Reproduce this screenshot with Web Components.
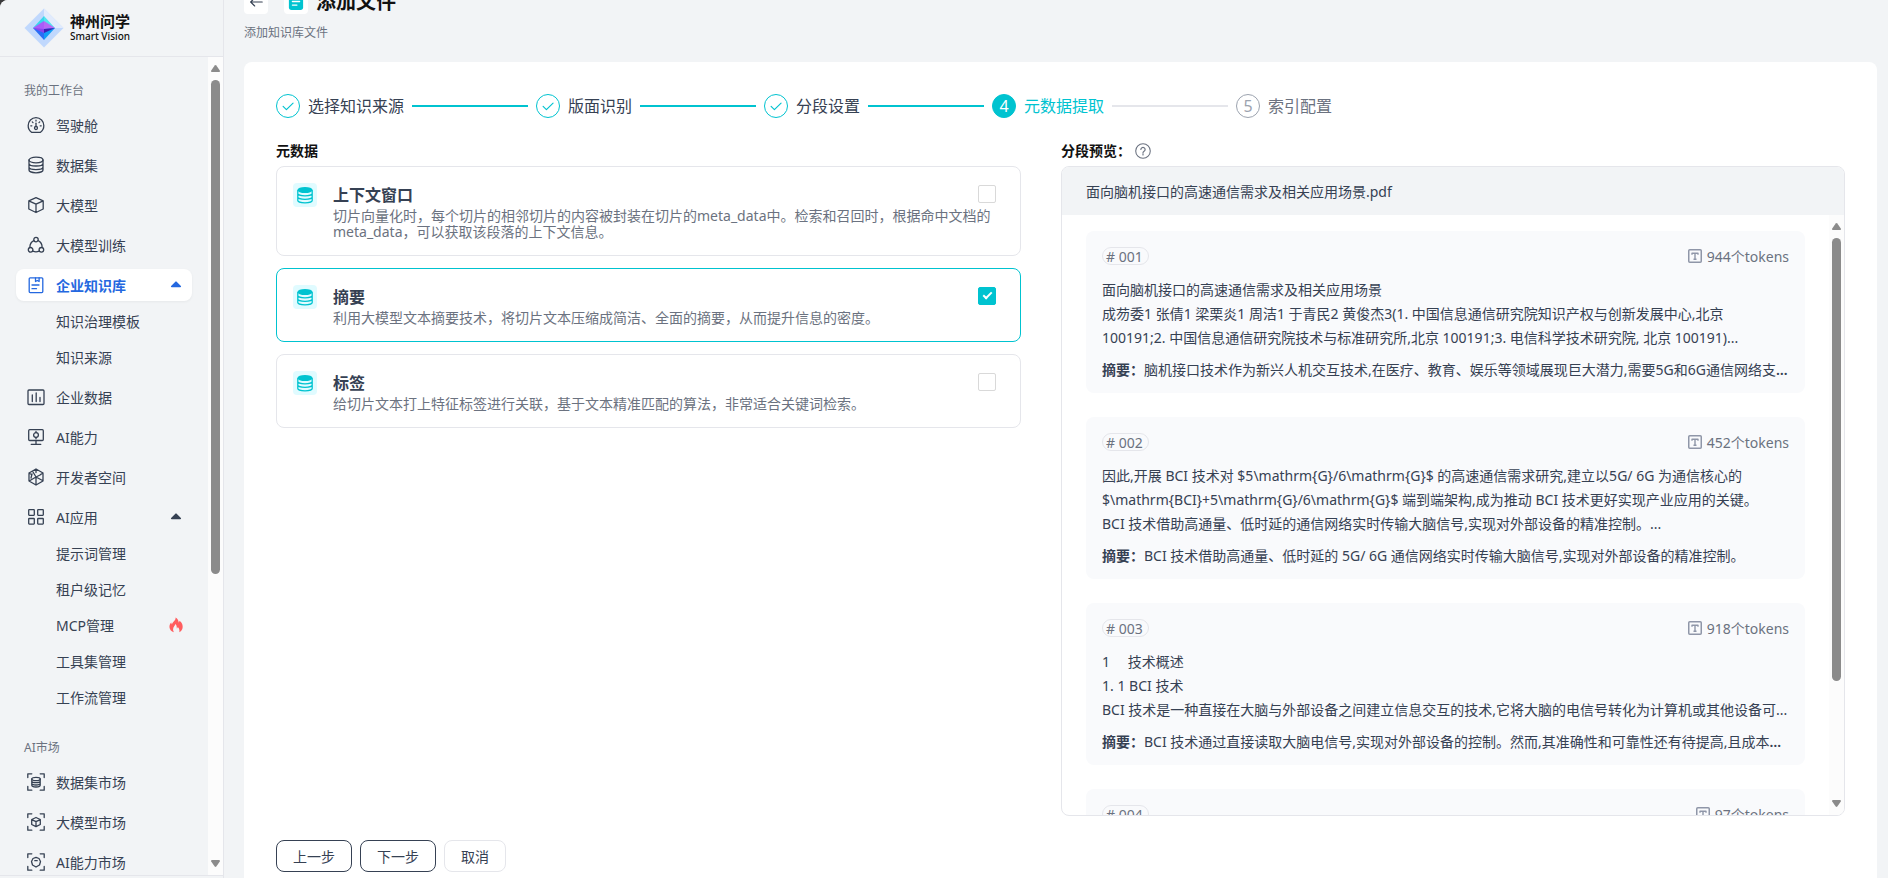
<!DOCTYPE html>
<html lang="zh-CN">
<head>
<meta charset="utf-8">
<title>添加文件</title>
<style>
  html, body { margin: 0; height: 100%; }
  body {
    background: #3a3a3c;
    overflow: hidden;
    font-family: "Noto Sans", "Noto Sans CJK SC", sans-serif;
    font-size: 14px;
    color: #364153;
    --ink: #364153;
    --muted: #6b7280;
    --line: #e5e6eb;
    --surface: #f2f4f6;
    --accent: #00c3d0;
    --active: #2468e0;
  }
</style>
</head>
<body>
<sv-app></sv-app>
<script>
const icons = {
  gauge: '<path d="M4.5 16.3A7.9 7.9 0 0 1 1.2 9.6 7.8 7.8 0 0 1 9 1.7a7.8 7.8 0 0 1 7.8 7.9 7.9 7.9 0 0 1-3.3 6.7Z"/><circle cx="9" cy="12" r="1.5"/><path d="M9 10.3V7.2"/><path d="M9 4.2v.9M5.3 5.9l.7.7M12.7 5.9l-.7.7M3.8 9.8h1M14.2 9.8h-1" />',
  database: '<ellipse cx="9" cy="4" rx="7" ry="2.8"/><path d="M2 4v10c0 1.5 3.1 2.8 7 2.8s7-1.300 7-2.800V4M2 7.400c0 1.500 3.100 2.600 7 2.600s7-1.100 7-2.600M2 11c0 1.500 3.100 2.600 7 2.600s7-1.100 7-2.600"/>',
  cube: '<path d="M9 1.700 16.200 4.800v8.200L9 16.500 1.800 13V4.800ZM1.800 4.900 9 8.200l7.200-3.300M9 8.200v8.200"/>',
  train: '<circle cx="9" cy="3.600" r="2.200"/><circle cx="3.600" cy="13.800" r="2.300"/><circle cx="14.400" cy="13.800" r="2.300"/><path d="M6.800 4.600C4.500 5.800 2.900 8 2.900 11M11.200 4.600c2.300 1.200 3.900 3.400 3.900 6.400M5.900 15.200c2 .8 4.200.8 6.200 0"/>',
  book: '<rect x="2.200" y="1.800" width="13.600" height="14.800" rx="1"/><path d="M8.500 1.800v3.700l1.800-1 1.800 1V1.800M5 9h7M5 12.700h4.500"/>',
  chart: '<rect x="1" y="2" width="16" height="14.500" rx="1"/><path d="M5.300 7v6.500M9.200 5v8.500M13 9.500v4"/>',
  screen: '<rect x="1.700" y="1.700" width="14.600" height="10.800" rx="1"/><path d="M9 12.500v3.500M4.200 16.300h9.600"/><circle cx="9" cy="7.100" r="2.400"/><path d="M9 3.500v1M9 9.700v1"/>',
  hexagon: '<path d="m9 1 7 4v8l-7 4-7-4V5ZM9 1v3.500M9 17v-3.500M2 5l2.500 1.500M16 5l-2.500 1.500M6 4l3 5M9 9v5M9 9l5-2.500M9 9 3 12.500M9 9l6.500 3.500M5 6l-1 4"/>',
  grid: '<rect x="1.700" y="1.700" width="5.600" height="5.600" rx=".5"/><rect x="10.700" y="1.700" width="5.600" height="5.600" rx=".5"/><rect x="1.700" y="10.500" width="5.600" height="5.600" rx=".5"/><rect x="10.700" y="10.500" width="5.600" height="5.600" rx=".5"/>',
  marketData: '<path d="M.8 4.500V.8h4M13.200.8h4v3.700M17.200 13.500v3.700h-4M4.800 17.200h-4v-3.700"/><ellipse cx="9" cy="6" rx="4.200" ry="1.700"/><path d="M4.800 6v6.300c0 .9 1.900 1.700 4.200 1.700s4.200-.8 4.200-1.700V6M4.800 8c0 1 1.900 1.700 4.200 1.700S13.200 9 13.200 8M4.800 10.300c0 1 1.900 1.700 4.200 1.700s4.200-.7 4.200-1.700"/>',
  marketModel: '<path d="M.8 4.500V.8h4M13.200.8h4v3.700M17.200 13.500v3.700h-4M4.800 17.200h-4v-3.700M9 4.500l4.300 2v5L9 13.700l-4.300-2.200v-5ZM4.700 6.600 9 8.600l4.300-2M9 8.600v5"/>',
  marketAi: '<path d="M.8 4.500V.8h4M13.200.8h4v3.700M17.200 13.500v3.700h-4M4.800 17.200h-4v-3.700M6 5.500l3-1.200 3 1.200 1.500 3-1 3.500L9 14l-3.500-2-1-3.500ZM7.800 7.700h2.400"/>',
  check: '<path d="m3.500 9.500 3.700 3.500 7.500-7.300"/>',
  back: '<path d="M16 9H3M7.500 4.500 3 9l4.500 4.500"/>',
  token: '<rect x="2.750" y="2.750" width="12.500" height="12.500" rx="1" stroke-width="1.500"/><path stroke-width="1.400" stroke-linecap="butt" d="M6 7.700V6.200h6v1.500M9 6.200v6M7.500 12.300h3"/>',
  help: '<circle cx="9" cy="9" r="8.200" stroke-width="1.200"/><path d="M6.600 7.200a2.400 2.300 0 1 1 3.600 2c-.8.500-1.200.8-1.200 1.700M9 12.300v1.200"/>',
  stack: '<ellipse cx="9" cy="4" rx="7.500" ry="3.100" fill="currentColor" stroke="none"/><path d="M1.800 4.500v10c0 1.200 3.200 2.300 7.200 2.300s7.200-1.100 7.200-2.300v-10M1.800 7.500c0 1.200 3.200 2.300 7.200 2.300s7.200-1.100 7.200-2.300M1.800 11c0 1.200 3.200 2.300 7.200 2.300s7.200-1.100 7.200-2.300"/>',
  file: '<rect x="1" y="0" width="16" height="18" rx="3" fill="currentColor" stroke="none"/><path stroke="#fff" stroke-width="1.600" d="M5 8.500h8M5 12.500h5"/>',
  flame: '<path fill="currentColor" stroke="none" d="M8.600.7c2.300 1.300 3.300 3.300 3.400 5.600.5-.5.900-1.200 1-2 2.800 2.300 4 5 3.400 8-.4 2.200-1.700 3.800-3.700 4.900.5-2 .2-4-1.700-6-.2.900-.6 1.400-1.100 1.800C10 10.700 9.500 9 8.300 8c.1 1.700-2.800 3.200-2.600 6.200 0 1 .3 2 .9 3-2.800-1-4.600-3-4.900-5.500-.3-2.200.5-4 1.900-5.500.1 1 .4 1.600.9 2.200C4.900 5.800 8.700 4.600 8.600.7Z"/>',
  caret: '<path fill="currentColor" stroke="none" d="M9 5.500c.4 0 .6.100.9.400l4 4.200c.4.500.2 1.200-.6 1.200H4.700c-.8 0-1-.7-.6-1.200l4-4.200c.3-.3.500-.4.900-.4Z"/>'
};

const define = (name, markup, setup) => {
  const template = document.createElement('template');
  template.innerHTML = markup;
  customElements.define(name, class extends HTMLElement {
    constructor() {
      super();
      this.attachShadow({ mode: 'open' }).append(template.content.cloneNode(true));
    }
    connectedCallback() { if (setup) setup(this, this.shadowRoot); }
  });
};

define('sv-icon', `
  <style>
    :host { display: inline-flex; flex: none; width: 18px; height: 18px; }
    svg { width: 100%; height: 100%; display: block; }
  </style>
  <svg viewBox="0 0 18 18" fill="none" stroke="currentColor" stroke-width="1.3" stroke-linecap="round" stroke-linejoin="round" aria-hidden="true"></svg>`,
  (el, root) => { root.querySelector('svg').innerHTML = icons[el.getAttribute('name')] || ''; });

define('sv-scrollbar', `
  <style>
    :host { display: flex; flex: none; flex-direction: column; gap: 8px; width: 15px; box-sizing: border-box; padding: 8px 3px; background: #fcfcfc; color: #8b8b8b; }
    svg { display: block; width: 9px; height: 7px; flex: none; }
    .track { flex: 1; min-height: 0; }
    .thumb { height: var(--thumb, 50%); border-radius: 5px; background: currentColor; }
  </style>
  <svg viewBox="0 0 9 7"><path fill="currentColor" d="M3.700.5Q4.500-.4 5.300.5L8.800 5.500Q9.200 7 8 7H1Q-.2 7 .2 5.500Z"/></svg>
  <div class="track"><div class="thumb"></div></div>
  <svg viewBox="0 0 9 7"><path fill="currentColor" d="M3.700 6.500Q4.500 7.400 5.300 6.500L8.800 1.500Q9.200 0 8 0H1Q-.2 0 .2 1.500Z"/></svg>`);

define('sv-logo', `
  <style>
    :host { display: flex; align-items: center; gap: 6px; color: #111; }
    svg { width: 40px; height: 40px; }
    .words { display: flex; flex-direction: column; }
    .cn { font-size: 15px; font-weight: 700; line-height: 16px; }
    .en { font-size: 10px; font-weight: 500; line-height: 14px; }
  </style>
  <svg viewBox="0 0 40 40" aria-hidden="true">
    <path fill="#c0d8fd" d="M20 .5 39.500 20 20 39.500.5 20Z"/>
    <path fill="#e2ebfc" d="M20 .5 39.500 20H20Z"/>
    <path fill="#38d5ee" d="M20 8 9 20h11Z"/>
    <path fill="#52e4ee" d="m20 8 11 12H20Z"/>
    <path fill="#2a6df5" d="M9 20h11v12Z"/>
    <path fill="#129ef5" d="M31 20H20v12Z"/>
    <path fill="#a95cf8" d="m20 13-11 7 11 3Z"/>
    <path fill="#b768f5" d="m20 13 11 7-11 1Z"/>
    <path fill="#3d1fb5" d="m20 21 11-1-11 5Z"/>
    <path fill="#8a45ee" d="m9 20 11 1v4Z"/>
  </svg>
  <span class="words"><span class="cn">神州问学</span><span class="en">Smart Vision</span></span>`);

define('sv-nav-item', `
  <style>
    :host { display: block; padding: 4px 0; }
    a { display: flex; align-items: center; height: 32px; box-sizing: border-box; padding: 0 7px 0 11px; gap: 11px; border-radius: 8px; color: inherit; text-decoration: none; }
    .text { flex: 1; }
    .caret { display: none; }
    :host([open]) .caret { display: inline-flex; }
    :host([active]) a { background: #fff; color: var(--active); font-weight: 600; box-shadow: 0 1px 3px #0000000d; }
    :host([sub]) { padding: 0 0 4px; }
    :host([sub]) a { padding-left: 40px; }
    :host([sub]) .icon { display: none; }
  </style>
  <a href="#"><sv-icon class="icon"></sv-icon><span class="text"><slot></slot></span><slot name="badge"></slot><sv-icon class="caret" name="caret"></sv-icon></a>`,
  (el, root) => {
    const icon = root.querySelector('.icon');
    if (el.hasAttribute('icon')) {
      icon.setAttribute('name', el.getAttribute('icon'));
      icon.connectedCallback();
    }
    if (el.hasAttribute('active')) root.querySelector('a').setAttribute('aria-current', 'page');
  });

define('sv-sidebar', `
  <style>
    :host { display: flex; flex-direction: column; width: 223px; border-right: 1px solid var(--line); background: var(--surface); }
    header { display: flex; align-items: center; height: 56px; padding: 0 24px; border-bottom: 1px solid var(--line); }
    .scroll { display: flex; flex: 1; min-height: 0; border-bottom: 1px solid var(--line); margin-bottom: 2px; }
    nav { flex: 1; overflow: hidden; padding: 25px 16px 0; }
    h2 { margin: 0 8px 5px; font-size: 12px; line-height: 18px; font-weight: 400; color: var(--muted); }
    h2.next { margin-top: 22px; }
    .flame { color: #ff5d5f; width: 16px; height: 16px; margin-right: 1px; }
    sv-scrollbar { --thumb: 64%; }
  </style>
  <header><sv-logo></sv-logo></header>
  <div class="scroll">
    <nav>
      <h2>我的工作台</h2>
      <sv-nav-item icon="gauge">驾驶舱</sv-nav-item>
      <sv-nav-item icon="database">数据集</sv-nav-item>
      <sv-nav-item icon="cube">大模型</sv-nav-item>
      <sv-nav-item icon="train">大模型训练</sv-nav-item>
      <sv-nav-item icon="book" active open>企业知识库</sv-nav-item>
      <sv-nav-item sub>知识治理模板</sv-nav-item>
      <sv-nav-item sub>知识来源</sv-nav-item>
      <sv-nav-item icon="chart">企业数据</sv-nav-item>
      <sv-nav-item icon="screen">AI能力</sv-nav-item>
      <sv-nav-item icon="hexagon">开发者空间</sv-nav-item>
      <sv-nav-item icon="grid" open>AI应用</sv-nav-item>
      <sv-nav-item sub>提示词管理</sv-nav-item>
      <sv-nav-item sub>租户级记忆</sv-nav-item>
      <sv-nav-item sub>MCP管理<sv-icon slot="badge" class="flame" name="flame"></sv-icon></sv-nav-item>
      <sv-nav-item sub>工具集管理</sv-nav-item>
      <sv-nav-item sub>工作流管理</sv-nav-item>
      <h2 class="next">AI市场</h2>
      <sv-nav-item icon="marketData">数据集市场</sv-nav-item>
      <sv-nav-item icon="marketModel">大模型市场</sv-nav-item>
      <sv-nav-item icon="marketAi">AI能力市场</sv-nav-item>
    </nav>
    <sv-scrollbar></sv-scrollbar>
  </div>`);

define('sv-step', `
  <style>
    :host { display: flex; align-items: center; gap: 8px; font-size: 16px; line-height: 24px; }
    .dot { display: flex; align-items: center; justify-content: center; width: 24px; height: 24px; box-sizing: border-box; border: 1px solid var(--accent); border-radius: 50%; color: var(--accent); }
    .dot sv-icon { width: 16px; height: 16px; }
    .line { width: 116px; height: 2px; background: var(--accent); }
    :host([state="current"]) .dot { background: var(--accent); color: #fff; }
    :host([state="current"]) { color: var(--accent); }
    :host([state="current"]) .line { background: var(--line); }
    :host([state="todo"]) { color: var(--muted); }
    :host([state="todo"]) .dot { border-color: #9ca3af; color: #9ca3af; }
    :host(:last-of-type) .line { display: none; }
  </style>
  <span class="dot"></span><span><slot></slot></span><span class="line"></span>`,
  (el, root) => {
    const number = el.getAttribute('number');
    root.querySelector('.dot').innerHTML = number || '<sv-icon name="check"></sv-icon>';
  });

define('sv-option', `
  <style>
    :host { display: block; }
    label { display: flex; gap: 16px; padding: 16px 24px 15px 16px; border: 1px solid var(--line); border-radius: 8px; }
    label:has(:checked) { border-color: var(--accent); }
    .badge { display: flex; flex: none; align-items: center; justify-content: center; width: 24px; height: 24px; border-radius: 4px; background: #e0fbff; color: var(--accent); }
    .body { flex: 1; }
    .head { display: flex; justify-content: space-between; align-items: center; height: 22px; margin-bottom: 3px; font-size: 16px; font-weight: 600; }
    .desc { display: block; line-height: 16px; color: var(--muted); }
    input { appearance: none; display: flex; align-items: center; justify-content: center; width: 18px; height: 18px; margin: 0; border: 1px solid #d9d9d9; border-radius: 2px; background: #fff; }
    input:checked { background: var(--accent); border-color: var(--accent); }
    input:checked::before { content: ""; width: 7px; height: 3px; border: solid #fff; border-width: 0 0 2px 2px; transform: rotate(-45deg); margin-bottom: 3px; }
  </style>
  <label>
    <span class="badge"><sv-icon name="stack"></sv-icon></span>
    <span class="body">
      <span class="head"><slot name="title"></slot><input type="checkbox"></span>
      <span class="desc"><slot></slot></span>
    </span>
  </label>`,
  (el, root) => { root.querySelector('input').checked = el.hasAttribute('checked'); });

define('sv-chunk', `
  <style>
    :host { display: block; flex: none; padding: 12px 16px 11px; border-radius: 8px; background: #f9fafc; }
    .head { display: flex; align-items: center; justify-content: space-between; height: 26px; color: var(--muted); }
    .tag { height: 16px; line-height: 18px; padding: 0 5px 0 3px; border: 1px solid var(--line); border-radius: 9px; }
    .tokens { display: flex; align-items: center; gap: 3px; }
    .tokens sv-icon { color: #8f96a8; }
    .text { margin: 9px 0 8px; line-height: 24px; white-space: pre-wrap; }
    .summary { margin: 0; line-height: 24px; font-weight: 600; white-space: nowrap; overflow: hidden; text-overflow: ellipsis; }
    .summary span { font-weight: 400; }
  </style>
  <div class="head"><span class="tag"></span><span class="tokens"><sv-icon name="token"></sv-icon><span class="count"></span></span></div>
  <p class="text"></p>
  <p class="summary"></p>`,
  (el, root) => {
    const chunk = el.data;
    root.querySelector('.tag').textContent = chunk.id;
    root.querySelector('.count').textContent = chunk.tokens;
    root.querySelector('.text').textContent = chunk.text;
    if (chunk.summary) {
      const body = document.createElement('span');
      body.textContent = chunk.summary;
      root.querySelector('.summary').append('摘要：', body, chunk.more ? '…' : '');
    }
  });

const chunks = [
  { id: '# 001', tokens: '944个tokens', more: true,
    text: '面向脑机接口的高速通信需求及相关应用场景\n成芴委1 张倩1 梁栗炎1 周洁1 于青民2 黄俊杰3(1. 中国信息通信研究院知识产权与创新发展中心,北京 100191;2. 中国信息通信研究院技术与标准研究所,北京 100191;3. 电信科学技术研究院, 北京 100191)...',
    summary: '脑机接口技术作为新兴人机交互技术,在医疗、教育、娱乐等领域展现巨大潜力,需要5G和6G通信网络支' },
  { id: '# 002', tokens: '452个tokens',
    text: '因此,开展 BCI 技术对 $5\\mathrm{G}/6\\mathrm{G}$ 的高速通信需求研究,建立以5G/ 6G 为通信核心的 $\\mathrm{BCI}+5\\mathrm{G}/6\\mathrm{G}$ 端到端架构,成为推动 BCI 技术更好实现产业应用的关键。\nBCI 技术借助高通量、低时延的通信网络实时传输大脑信号,实现对外部设备的精准控制。...',
    summary: 'BCI 技术借助高通量、低时延的 5G/ 6G 通信网络实时传输大脑信号,实现对外部设备的精准控制。' },
  { id: '# 003', tokens: '918个tokens', more: true,
    text: '1\u3000 技术概述\n1. 1 BCI 技术\nBCI 技术是一种直接在大脑与外部设备之间建立信息交互的技术,它将大脑的电信号转化为计算机或其他设备可...',
    summary: 'BCI 技术通过直接读取大脑电信号,实现对外部设备的控制。然而,其准确性和可靠性还有待提高,且成本' },
  { id: '# 004', tokens: '97个tokens', text: '', summary: '' }
];

define('sv-preview', `
  <style>
    :host { display: flex; flex-direction: column; min-height: 0; flex: 1; border: 1px solid var(--line); border-radius: 8px; overflow: hidden; }
    header { flex: none; height: 48px; line-height: 50px; padding: 0 24px; background: var(--surface); }
    .body { display: flex; flex: 1; min-height: 0; }
    .list { flex: 1; min-width: 0; display: flex; flex-direction: column; gap: 24px; padding: 16px 24px 0; overflow: hidden; }
    sv-scrollbar { --thumb: 80%; }
  </style>
  <header>面向脑机接口的高速通信需求及相关应用场景.pdf</header>
  <div class="body"><div class="list"></div><sv-scrollbar></sv-scrollbar></div>`,
  (el, root) => {
    for (const data of chunks) {
      const item = document.createElement('sv-chunk');
      item.data = data;
      root.querySelector('.list').append(item);
    }
  });

define('sv-button', `
  <style>
    :host { display: inline-block; }
    button { height: 32px; padding: 0 16px; border: 1px solid var(--ink); border-radius: 8px; background: #fff; color: var(--ink); font: inherit; }
    :host([plain]) button { border-color: var(--line); }
  </style>
  <button type="button"><slot></slot></button>`);

define('sv-page', `
  <style>
    :host { display: flex; flex-direction: column; min-width: 0; padding: 0 11px 0 20px; background: var(--surface); }
    .title { display: flex; align-items: center; height: 24px; margin-top: -10px; gap: 16px; }
    .title button, .mark { display: flex; align-items: center; justify-content: center; width: 24px; height: 24px; padding: 0; border: 0; border-radius: 4px; background: #fff; color: var(--ink); }
    .mark { color: var(--accent); }
    .title sv-icon { width: 16px; height: 16px; }
    .name { display: flex; align-items: center; gap: 8px; }
    h1 { margin: 0; font-size: 20px; line-height: 26px; font-weight: 700; color: #111; }
    .hint { margin: 10px 0 20px; font-size: 12px; line-height: 18px; color: var(--muted); }
    main { display: flex; flex: 1; flex-direction: column; min-height: 0; box-sizing: border-box; padding: 32px 32px 6px; border-radius: 8px 8px 0 0; background: #fff; }
    .steps { display: flex; gap: 8px; }
    .columns { display: grid; grid-template-columns: 745fr 784fr; gap: 40px; flex: 1; min-height: 0; margin: 20px 0 24px; }
    section { display: flex; flex-direction: column; min-width: 0; min-height: 0; }
    h2 { display: flex; align-items: center; gap: 4px; margin: 0 0 2px; font-size: 14px; line-height: 26px; font-weight: 700; color: #111; }
    h2 sv-icon { width: 16px; height: 16px; color: var(--muted); }
    .options { display: grid; gap: 12px; }
    footer { display: flex; gap: 8px; }
  </style>
  <div class="title">
    <button type="button" aria-label="返回"><sv-icon name="back"></sv-icon></button>
    <div class="name"><span class="mark"><sv-icon name="file"></sv-icon></span><h1>添加文件</h1></div>
  </div>
  <p class="hint">添加知识库文件</p>
  <main>
    <div class="steps">
      <sv-step>选择知识来源</sv-step>
      <sv-step>版面识别</sv-step>
      <sv-step>分段设置</sv-step>
      <sv-step number="4" state="current">元数据提取</sv-step>
      <sv-step number="5" state="todo">索引配置</sv-step>
    </div>
    <div class="columns">
      <section>
        <h2>元数据</h2>
        <div class="options">
          <sv-option><span slot="title">上下文窗口</span>切片向量化时，每个切片的相邻切片的内容被封装在切片的meta_data中。检索和召回时，根据命中文档的meta_data，可以获取该段落的上下文信息。</sv-option>
          <sv-option checked><span slot="title">摘要</span>利用大模型文本摘要技术，将切片文本压缩成简洁、全面的摘要，从而提升信息的密度。</sv-option>
          <sv-option><span slot="title">标签</span>给切片文本打上特征标签进行关联，基于文本精准匹配的算法，非常适合关键词检索。</sv-option>
        </div>
      </section>
      <section>
        <h2>分段预览：<sv-icon name="help"></sv-icon></h2>
        <sv-preview></sv-preview>
      </section>
    </div>
    <footer><sv-button>上一步</sv-button><sv-button>下一步</sv-button><sv-button plain>取消</sv-button></footer>
  </main>`);

define('sv-app', `
  <style>
    :host { display: grid; grid-template-columns: auto 1fr; grid-template-rows: 100%; height: 100vh; overflow: hidden; border-top-left-radius: 8px; background: var(--surface); }
  </style>
  <sv-sidebar></sv-sidebar><sv-page></sv-page>`);
</script>
</body>
</html>
